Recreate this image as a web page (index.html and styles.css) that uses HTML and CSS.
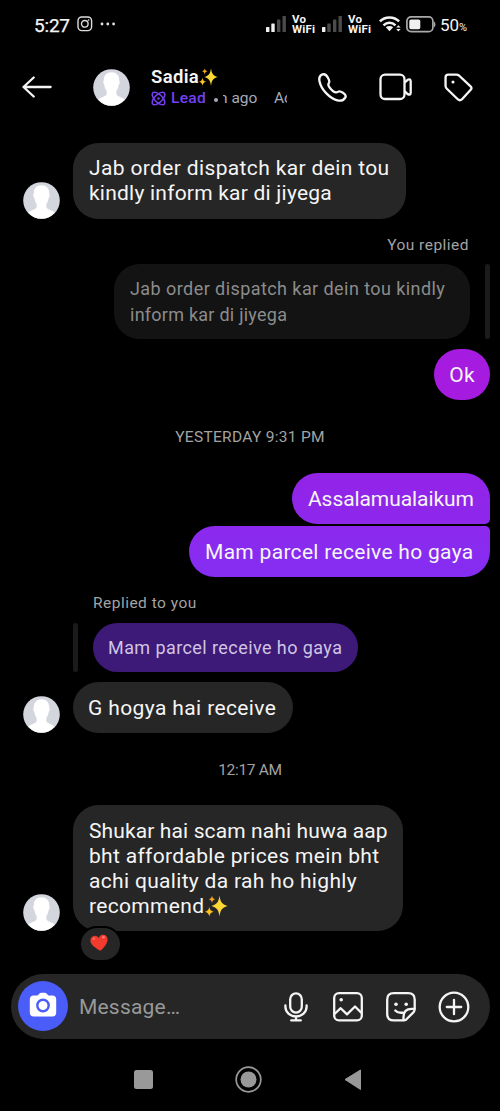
FILE: index.html
```html
<!DOCTYPE html>
<html lang="en">
<head>
<meta charset="utf-8">
<title>Sadia</title>
<link rel="stylesheet" href="styles.css">
</head>
<body>
<svg class="defs" width="0" height="0" aria-hidden="true">
  <symbol id="person" viewBox="0 0 37 37">
    <circle cx="18.5" cy="18.5" r="18.3" fill="#d3d6dd"/>
    <path fill="#fff" d="M18.5 3.200c4.800 0 7.700 3.200 7.700 8 0 1 .7.900.5 2.500-.2 1.300-.8 1.500-1 2.200-.5 2.700-1.200 4.500-2.300 5.900v3.200c0 2.200 4.900 2.900 8.300 5.400A18.300 18.300 0 0 1 18.500 36.800 18.300 18.300 0 0 1 5.300 30.400c3.400-2.500 8.300-3.200 8.300-5.400v-3.200c-1.100-1.400-1.800-3.200-2.300-5.900-.2-.7-.8-.9-1-2.200-.2-1.600.5-1.500.5-2.500 0-4.800 2.900-8 7.700-8z"/>
  </symbol>
  <symbol id="sparkles" viewBox="0 0 24 24">
    <path fill="#fdd835" d="M15 1.500c.9 6.500 2.300 8.600 8 10.500-5.700 1.900-7.100 4-8 10.500-.9-6.500-2.300-8.600-8-10.500 5.700-1.900 7.100-4 8-10.500z"/>
    <path fill="#fbc11f" d="M4.800 12.800c.5 3 1.400 4 4.300 4.900-2.900.9-3.800 1.900-4.300 4.900-.5-3-1.400-4-4.300-4.900 2.900-.9 3.800-1.900 4.300-4.900z"/>
    <path fill="#f4a623" d="M7.500 1.500c.4 2.200 1.100 3 3.300 3.700-2.200.7-2.900 1.500-3.300 3.700-.4-2.200-1.100-3-3.300-3.700 2.200-.7 2.900-1.500 3.300-3.700z"/>
  </symbol>
</svg>

<div class="status">
  <span class="clock">5:27</span>
  <svg class="insta" width="16" height="16" viewBox="0 0 16 16" fill="none" stroke="#ddd" stroke-width="1.400"><rect x="1" y="1" width="13.600" height="13.600" rx="3.800"/><circle cx="7.800" cy="7.800" r="3.300"/><circle cx="11.700" cy="4" r=".5" fill="#ddd" stroke-width=".7"/></svg>
  <svg width="16" height="4" viewBox="0 0 16 4" fill="#e4e4e4"><circle cx="2" cy="2" r="1.400"/><circle cx="7.800" cy="2" r="1.400"/><circle cx="13.600" cy="2" r="1.400"/></svg>
  <div class="status-right">
    <svg width="20" height="16" viewBox="0 0 20 16"><g fill="#f0f0f0"><rect y="11" width="3.400" height="5" rx=".6"/><rect x="5.300" y="7.500" width="3.400" height="8.500" rx=".6"/></g><g fill="#4b4b4b"><rect x="11" y="3.500" width="3.400" height="12.500" rx=".6"/><rect x="16.500" width="3.400" height="16" rx=".6"/></g></svg>
    <div class="vowifi"><span>Vo</span><span>WiFi</span></div>
    <svg width="20" height="16" viewBox="0 0 20 16"><rect y="11" width="3.400" height="5" rx=".6" fill="#f0f0f0"/><g fill="#4b4b4b"><rect x="5.300" y="7.500" width="3.400" height="8.500" rx=".6"/><rect x="11" y="3.500" width="3.400" height="12.500" rx=".6"/><rect x="16.500" width="3.400" height="16" rx=".6"/></g></svg>
    <div class="vowifi"><span>Vo</span><span>WiFi</span></div>
    <svg class="wifi" width="22" height="16" viewBox="0 0 22 16" fill="none" stroke="#f2f2f2" stroke-width="2.500"><path d="M.9 5.400C6 .2 15 .2 20.100 5.400"/><path d="M4.500 9.300c3.500-3.500 8.500-3.500 12 0"/><path fill="#f2f2f2" stroke="none" d="M6.800 11.300c2.200-1.700 5.200-1.700 7.400 0l-3.700 4z"/><path fill="#f2f2f2" stroke="none" d="M17.200 11.600l2.200-2.400 2.200 2.400zM17.200 13l2.200 2.400 2.200-2.400z"/></svg>
    <svg class="battery" width="30" height="17" viewBox="0 0 30 17"><rect x=".9" y=".9" width="26" height="14.800" rx="4.200" fill="none" stroke="#aaa" stroke-width="1.700"/><rect x="3.300" y="3.400" width="11" height="9.800" rx="1.700" fill="#f0f0f0"/><path d="M28 5.500q1.400.4 1.400 2.900T28 11.300z" fill="#aaa"/></svg>
    <span class="percent">50<small>%</small></span>
  </div>
</div>

<div class="header">
  <svg class="back" width="30" height="24" viewBox="0 0 30 24" fill="none" stroke="#f5f5f5" stroke-width="2.300" stroke-linecap="round" stroke-linejoin="round"><path d="M28.600 12H1.500M11.700 2.500L1.500 12l10.200 9.500"/></svg>
  <svg class="avatar"><use href="#person"/></svg>
  <div class="who">
    <div class="name"><span>Sadia</span><svg width="21" height="20"><use href="#sparkles"/></svg></div>
    <div class="sub">
      <svg width="15" height="15" viewBox="0 0 15 15" fill="none" stroke="#7440f5" stroke-width="1.500"><ellipse cx="7.500" cy="7.500" rx="8" ry="3.800" transform="rotate(45 7.500 7.500)"/><ellipse cx="7.500" cy="7.500" rx="8" ry="3.800" transform="rotate(-45 7.500 7.500)"/><circle cx="7.500" cy="7.500" r="1.300" fill="#7440f5" stroke="none"/></svg>
      <span class="lead">Lead</span>
      <span class="dot"></span>
      <span class="ticker"><span class="ago">n ago</span><span class="active">Ac</span></span>
    </div>
  </div>
  <div class="actions">
    <svg width="29" height="29" viewBox="0 0 30 30" fill="none" stroke="#f5f5f5" stroke-width="2.400" stroke-linejoin="round"><path d="M4.500 1.500c2-.7 4.300.5 5.600 3.100 1.500 2.900 2.300 4 1.200 5.600-1.100 1.500-.9 2.600.4 4.500 1.200 1.700 2.400 3 4 4.200 2.100 1.500 3.300 1.600 4.800.6 1.600-1.100 2.800-.8 5.300.9 2.600 1.700 3.400 3.200 2.500 4.800-1.500 2.700-4.900 3.900-8.300 3-3.500-.9-8-3.700-11.600-7.400C5 17.500 2.400 12.600 1.600 8.900.9 5.600 1.500 2.600 4.500 1.500z"/></svg>
    <svg width="33" height="28" viewBox="0 0 33 28" fill="none" stroke="#f5f5f5" stroke-width="2.300" stroke-linejoin="round"><rect x="1.500" y="1.700" width="24" height="24.300" rx="4.500"/><path d="M25.500 9.700l3.200-2.900q3-1.500 3 1.700v10.900q0 3.200-3 1.700l-3.200-2.900"/></svg>
    <svg width="29" height="29" viewBox="0 0 30 30" fill="none" stroke="#f5f5f5" stroke-width="2.400" stroke-linejoin="round"><path d="M1.600 4.400q0-2.800 2.800-2.800h8.300q1.600 0 2.800 1l12 11.300q1.800 1.700.1 3.400L18.400 27.400q-2 1.700-3.900 0L2.700 16q-1.100-1.200-1.100-2.800z"/><circle cx="9.300" cy="9.300" r="1.600" fill="#f5f5f5" stroke="none"/></svg>
  </div>
</div>

<div class="chat">
  <div class="row in">
    <svg class="avatar"><use href="#person"/></svg>
    <div class="bubble gray"><span class="wide">Jab order dispatch kar dein tou</span><br>kindly inform kar di jiyega</div>
  </div>
  <div class="note note-out">You replied</div>
  <div class="row out quoted">
    <div class="bubble quote-gray"><span class="wider">Jab order dispatch kar dein tou kindly</span><br>inform kar di jiyega</div>
    <div class="bar"></div>
  </div>
  <div class="row out"><div class="bubble violet1">Ok</div></div>
  <div class="date">YESTERDAY 9:31 PM</div>
  <div class="row out"><div class="bubble violet2">Assalamualaikum</div></div>
  <div class="row out tight"><div class="bubble violet3">Mam parcel receive ho gaya</div></div>
  <div class="note note-in">Replied to you</div>
  <div class="row quoted-in">
    <div class="bar"></div>
    <div class="bubble quote-violet">Mam parcel receive ho gaya</div>
  </div>
  <div class="row in">
    <svg class="avatar"><use href="#person"/></svg>
    <div class="bubble gray one">G hogya hai receive</div>
  </div>
  <div class="date late">12:17 AM</div>
  <div class="row in">
    <svg class="avatar"><use href="#person"/></svg>
    <div class="bubble gray review"><span class="snug">Shukar hai scam nahi huwa aap</span><br>bht affordable prices mein bht<br>achi quality da rah ho highly<br>recommend<svg class="spark" width="25" height="24"><use href="#sparkles"/></svg>
      <div class="reaction"><svg width="19" height="18" viewBox="0 0 19 18"><g transform="rotate(-8 9 9)"><path fill="#f23b2f" d="M9.400 17C4.200 13.200.8 9.700.8 5.900c0-2.700 1.900-4.600 4.300-4.600 1.900 0 3.400 1 4.300 2.800.9-1.800 2.400-2.800 4.300-2.800 2.400 0 4.300 1.900 4.300 4.600 0 3.800-3.400 7.300-8.600 11.100z"/><ellipse cx="14.200" cy="4" rx="1.600" ry="1" fill="#ff8a7d"/><ellipse cx="4.500" cy="4" rx="1.400" ry="1" fill="#ff7668"/></g></svg></div>
    </div>
  </div>
</div>

<div class="composer">
  <div class="camera"><svg width="28" height="26" viewBox="0 0 28 26"><path fill="#fff" d="M8.500 3.600L10 1.900Q11 .8 12.500.8h3Q17 .8 18 1.900l1.500 1.700h3.700q4 0 4 4v12.900q0 4-4 4H4.800q-4 0-4-4V7.600q0-4 4-4z"/><circle cx="14" cy="13.500" r="5.700" fill="none" stroke="#4a5df9" stroke-width="2.400"/></svg></div>
  <span class="placeholder">Message…</span>
  <div class="tools">
    <svg width="24" height="30" viewBox="0 0 24 30" fill="none" stroke="#f5f5f5" stroke-width="2.300" stroke-linecap="round"><rect x="6.200" y="1.400" width="11.600" height="19.200" rx="5.800"/><path d="M1.400 13.500v1.300a10.600 9.700 0 0 0 21.200 0v-1.300M12 24.600v3.700M7.200 28.400h9.600"/></svg>
    <svg width="30" height="30" viewBox="0 0 30 30" fill="none" stroke="#f5f5f5" stroke-width="2.300" stroke-linejoin="round"><rect x="1.200" y="1.200" width="27.600" height="27.200" rx="4.800"/><path d="M1.500 22l6.200-5.800 6.300 6.200 8-7.900 6.500 6.300"/><circle cx="8.200" cy="7.700" r="1.800" fill="#f5f5f5" stroke="none"/></svg>
    <svg width="30" height="30" viewBox="0 0 30 30" fill="none" stroke="#f5f5f5" stroke-width="2.300" stroke-linecap="round" stroke-linejoin="round"><path d="M28.700 16.800V7.700q0-6.500-6.500-6.500H7.700q-6.500 0-6.500 6.500v14.200q0 6.500 6.500 6.500h9.800q1.800 0 3-1.100l7.100-7.200q1.100-1.200 1.100-3.300z"/><path d="M28.500 16.800h-2.800q-8.200 0-8.200 8.200v3.200M9.300 18.500q2.500 2.900 7.500 2.100"/><g fill="#f5f5f5" stroke="none"><circle cx="10" cy="12.300" r="1.800"/><circle cx="20.200" cy="12.300" r="1.800"/></g></svg>
    <svg width="32" height="32" viewBox="0 0 32 32" fill="none" stroke="#f5f5f5" stroke-width="2.300" stroke-linecap="round"><circle cx="16" cy="16" r="14.300"/><path d="M16 8.800v14.400M8.800 16h14.400"/></svg>
  </div>
</div>

<div class="nav">
  <svg width="19" height="19" viewBox="0 0 19 19"><rect width="19" height="19" rx="2.500" fill="#999"/></svg>
  <svg width="27" height="27" viewBox="0 0 27 27"><circle cx="13.500" cy="13.500" r="12.300" fill="none" stroke="#999" stroke-width="1.700"/><circle cx="13.500" cy="13.500" r="8" fill="#999"/></svg>
  <svg width="18" height="22" viewBox="0 0 18 22"><path d="M1 10.500L16.500 1v19.500z" fill="#999" stroke="#999" stroke-linejoin="round"/></svg>
</div>
</body>
</html>
```
FILE: styles.css
```css
* { box-sizing: border-box; }
body {
  margin: 0;
  width: 500px;
  height: 1111px;
  overflow: hidden;
  background: #000;
  color: #f5f5f5;
  font-family: Roboto, "Liberation Sans", sans-serif;
  display: flex;
  flex-direction: column;
}
svg { display: block; flex: none; }
.defs { position: absolute; }

.status { height: 48px; padding: 0 34px; display: flex; align-items: center; flex: none; }
.clock { font-size: 19px; width: 43px; padding-top: 2px; letter-spacing: -.2px; white-space: nowrap; -webkit-text-stroke: .25px; }
.insta { margin-right: 7px; }
.status-right { margin-left: auto; display: flex; align-items: center; }
.vowifi { width: 26px; margin: 0 4px 0 6px; font-size: 11.500px; letter-spacing: .2px; line-height: 10px; font-weight: 700; display: flex; flex-direction: column; }
.wifi { margin-left: 1px; }
.battery { margin: 0 4px 0 5px; }
.percent { font-size: 17px; white-space: nowrap; width: 26px; padding-top: 1px; }
.percent small { font-size: 11px; }

.header { height: 78px; padding: 0 27px 0 22px; display: flex; align-items: center; flex: none; }
.avatar { width: 37px; height: 37px; }
.header .avatar { margin: 0 21px 0 41px; }
.who { width: 136px; padding-top: 1px; }
.name { display: flex; align-items: center; font-size: 18.500px; font-weight: 600; line-height: 22px; letter-spacing: .35px; }
.name svg { margin-left: -1px; }
.sub { display: flex; align-items: center; font-size: 15.500px; line-height: 21px; }
.lead { color: #7440f5; font-weight: 500; margin-left: 5px; width: 38px; letter-spacing: .3px; }
.dot { width: 4px; height: 4px; border-radius: 50%; background: #a5abb8; margin: 2px 5px 0 5px; }
.ticker { flex: 1; display: flex; justify-content: space-between; overflow: hidden; white-space: nowrap; color: #a5abb8; }
.ago { margin-left: -4px; }
.active { width: 13px; overflow: hidden; }
.actions { margin-left: auto; display: flex; align-items: center; gap: 32px; }

.chat { padding: 16.500px 10px 0 23px; display: flex; flex-direction: column; flex: none; height: 847.500px; }
.row { display: flex; align-items: flex-end; flex: none; }
.row.in .avatar { margin-right: 13px; }
.out { justify-content: flex-end; }
.bubble { position: relative; border-radius: 25.500px; padding: 0 16px; height: 51px; line-height: 53px; font-size: 21px; letter-spacing: .3px; white-space: nowrap; }
.gray { background: #262626; height: 76px; padding-top: 13.500px; line-height: 25px; width: 333px; letter-spacing: .22px; }
.wide { letter-spacing: .36px; }
.wider { letter-spacing: .43px; }
.snug { letter-spacing: .12px; }
.gray.one { height: 51px; line-height: 53px; padding: 0 15px; width: 220px; letter-spacing: .38px; }
.gray.review { height: 126px; width: 330px; letter-spacing: .32px; padding-top: 14px; }
.note { color: #a3a3a3; font-size: 15.500px; line-height: 20px; height: 20px; letter-spacing: .48px; }
.note-out { text-align: right; padding-right: 21px; margin: 16px 0 9.500px; }
.quoted { gap: 15px; margin-bottom: 10px; }
.bar { width: 5px; align-self: stretch; border-radius: 3px; background: #1b1b1b; }
.quote-gray { background: #131313; color: #8c8c8c; width: 356px; height: 75px; font-size: 18px; line-height: 26px; padding: 12px 16px; letter-spacing: .25px; }
.violet1 { background: #a61be0; width: 56px; padding: 0; text-align: center; }
.date { text-align: center; color: #a3a3a3; font-size: 15.500px; line-height: 20px; margin: 27px 13px 26px 0; letter-spacing: .3px; }
.violet2 { background: linear-gradient(#9323e7, #8d28ec); width: 198px; border-bottom-right-radius: 5px; letter-spacing: -.08px; }
.tight { margin-top: 2px; }
.violet3 { background: linear-gradient(#8c29ed, #852df2); width: 301px; border-top-right-radius: 5px; }
.note-in { padding-left: 70px; margin: 16px 0 10px; }
.quoted-in { padding-left: 50px; gap: 15px; margin-bottom: 10px; }
.quote-violet { background: #3d1978; color: #d0c5e3; width: 265px; height: 49px; line-height: 50px; font-size: 18px; padding: 0 15px; letter-spacing: .42px; }
.late { margin-top: 27px; margin-bottom: 25px; letter-spacing: -.3px; }
.spark { display: inline-block; vertical-align: -5px; }
.reaction { position: absolute; left: 6px; top: 121px; width: 43px; height: 36px; border: 2px solid #000; border-radius: 18px; background: #262626; display: flex; align-items: center; justify-content: center; padding: 0 3px 3px 0; }

.composer { margin: 0 10px 0 11px; height: 65px; flex: none; border-radius: 33px; background: #262626; padding: 0 20px 0 7px; display: flex; align-items: center; }
.camera { width: 50px; height: 50px; border-radius: 50%; background: #4a5df9; display: flex; align-items: center; justify-content: center; padding-bottom: 2px; }
.placeholder { margin-left: 11px; font-size: 21px; letter-spacing: .2px; color: #999; padding-top: 1px; }
.tools { margin-left: auto; display: flex; align-items: center; gap: 22.500px; padding-top: 2px; }
.tools svg:first-child { margin-right: 3px; }
.nav { flex: 1; display: flex; align-items: center; padding: 10px 0 0 134px; }
.nav svg:nth-child(2) { margin: 0 82.500px 0 81.500px; }
```
